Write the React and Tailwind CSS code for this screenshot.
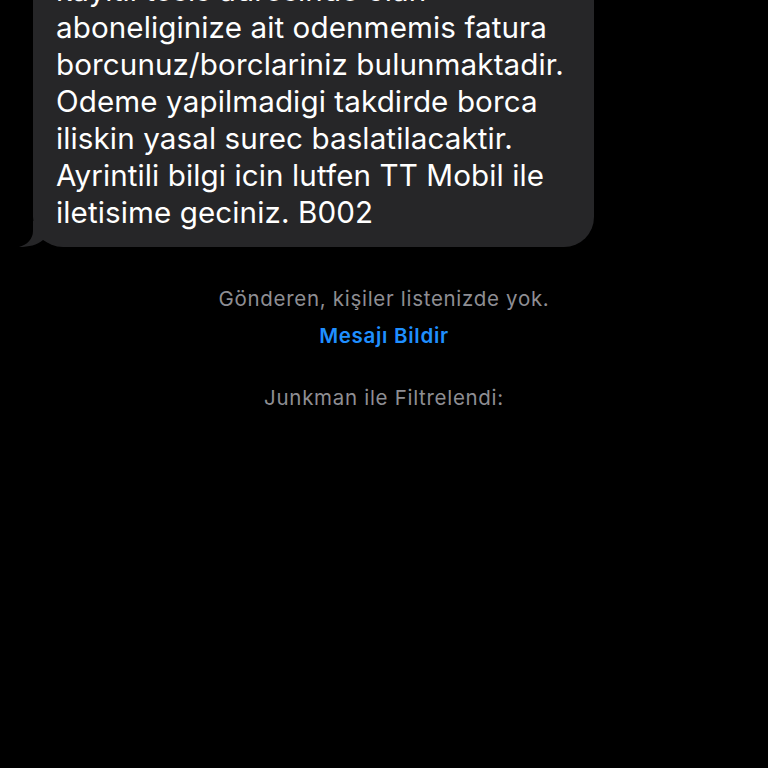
import React from 'react';

const lines = [
    'kayitli tesis adresinde olan',
    'aboneliginize ait odenmemis fatura',
    'borcunuz/borclariniz bulunmaktadir.',
    'Odeme yapilmadigi takdirde borca',
    'iliskin yasal surec baslatilacaktir.',
    'Ayrintili bilgi icin lutfen TT Mobil ile',
    'iletisime geciniz. B002',
];

const BubbleTail = () => (
    <svg className="absolute left-[-14px] bottom-0" width="30" height="26" viewBox="0 0 30 26">
        <path d="M14 0 L14 10 C14 18 8 24 0 26 C10 26 18 24 24 19 L30 22 L30 0 Z" fill="#262628" />
    </svg>
);

export default function App() {
    return (
        <div
            className="w-[768px] h-[768px] overflow-hidden bg-black"
            style={{ fontFamily: 'Inter, "Noto Sans", sans-serif' }}
        >
            <div className="pl-[33px]">
                <div className="relative w-[561px] mt-[-37px] bg-[#262628] rounded-[30px] pl-[23px] pr-4 pt-[9px] pb-[16px]">
                    {lines.map((line, i) => (
                        <div key={i} className="text-white text-[29.6px] leading-[37px] tracking-[0.1px] whitespace-nowrap">
                            {line}
                        </div>
                    ))}
                    <BubbleTail />
                </div>
            </div>

            <div className="flex flex-col items-center mt-[40px] text-[20.5px] leading-[24px] tracking-[0.7px]">
                <p className="text-[#8e8e93]">Gönderen, kişiler listenizde yok.</p>
                <p className="mt-[13px] text-[#1f8fff] font-semibold">Mesajı Bildir</p>
                <p className="mt-[38px] text-[#8e8e93]">Junkman ile Filtrelendi:</p>
            </div>
        </div>
    );
}
